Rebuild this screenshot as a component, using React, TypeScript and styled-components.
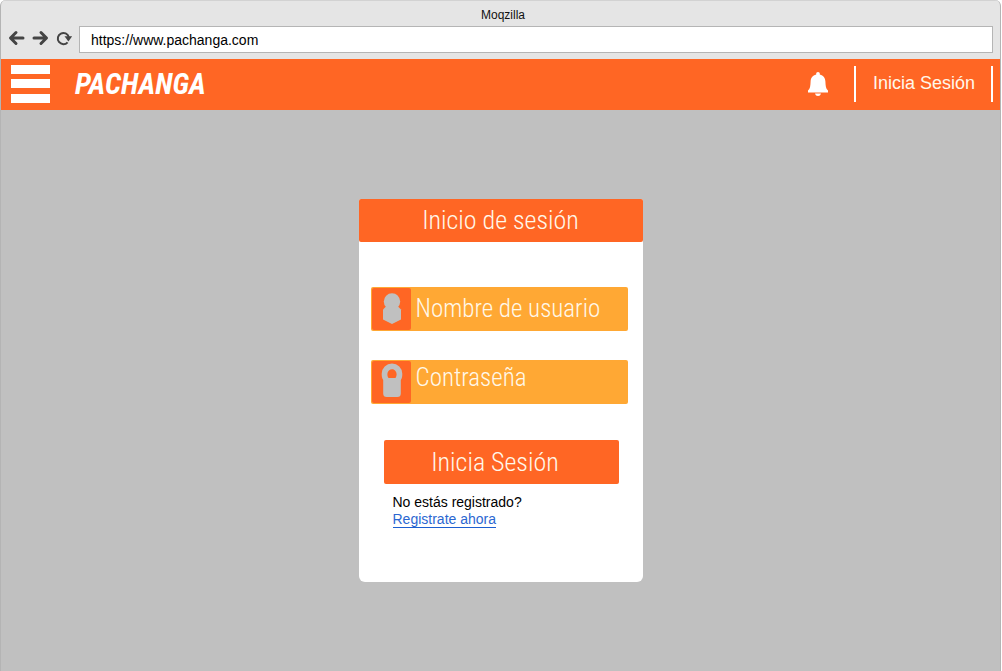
import React from 'react';
import styled, { createGlobalStyle } from 'styled-components';

const orange = '#ff6624';
const amber = '#ffa834';
const cream = '#fff8ea';
const silver = '#c0c0c0';
const sans = '"Liberation Sans", Arial, sans-serif';
const narrow = '"Roboto Condensed", Roboto, "Liberation Sans Narrow", sans-serif';
const condensed = '"Liberation Sans Narrow", "Roboto Condensed", Roboto, sans-serif';

const GlobalStyle = createGlobalStyle`
  * { box-sizing: border-box; }
  body { margin: 0; background: #fff; font-family: ${sans}; }
  button, input { font-family: inherit; margin: 0; }
`;

const Browser = styled.div`
  display: flex;
  flex-direction: column;
  min-height: 100vh;
  margin-right: 1px;
  background: ${silver};
  border: 1px solid #b4b4b4;
  border-width: 0 1px;
  border-radius: 6px 6px 0 0;
  overflow: hidden;
`;

const Chrome = styled.div`
  background: #e5e5e5;
  border-top: 1px solid #d2d2d2;
  padding: 5px 7px 6px;
`;

const WindowTitle = styled.div`
  height: 20px;
  padding-left: 5px;
  font-size: 12px;
  line-height: 18px;
  text-align: center;
  color: #111;
`;

const Toolbar = styled.div`
  display: flex;
  align-items: center;
`;

const ToolButton = styled.button`
  display: flex;
  width: 17px;
  height: 22px;
  padding: 0 0 4px;
  margin-right: 7px;
  align-items: center;
  justify-content: center;
  border: 0;
  background: none;
  color: #444;

  &:last-of-type { margin-right: 6px; }
`;

const Address = styled.input`
  flex: 1;
  min-width: 0;
  height: 27px;
  padding: 0 11px;
  border: 1px solid #b5b5b5;
  background: #fff;
  color: #000;
  font-size: 14px;
`;

const Header = styled.header`
  display: flex;
  align-items: center;
  height: 51px;
  padding: 0 7px 2px 10px;
  background: ${orange};
`;

const MenuButton = styled.button`
  display: flex;
  flex-direction: column;
  justify-content: space-between;
  width: 39px;
  height: 38px;
  padding: 0;
  border: 0;
  background: none;
`;

const MenuBar = styled.span`
  height: 9px;
  background: #fff;
`;

const Brand = styled.h1`
  flex: 1;
  margin: 0 0 0 25px;
  font: italic bold 29px/36px ${condensed};
  color: #fff;
`;

const BellButton = styled.button`
  display: flex;
  padding: 0;
  margin-right: 26px;
  border: 0;
  background: none;
  color: #fff;
`;

const Account = styled.div`
  display: flex;
  align-items: center;
  height: 36px;
  padding: 0 16px 0 17px;
  border: solid #fff;
  border-width: 0 2px;
`;

const AccountLink = styled.a`
  font-size: 18px;
  color: ${cream};
  text-decoration: none;
`;

const Main = styled.main`
  flex: 1;
  padding: 89px 16px;
`;

const Card = styled.form`
  width: 100%;
  max-width: 284px;
  margin: 0 auto;
  padding-bottom: 54px;
  border-radius: 2px 2px 6px 6px;
  background: #fff;
`;

const CardTitle = styled.h2`
  margin: 0 0 45px;
  border-radius: 2px;
  background: ${orange};
  color: ${cream};
  font: 300 26px/43px ${narrow};
  text-align: center;
`;

const Field = styled.label`
  display: flex;
  height: 44px;
  margin: 0 15px 29px 12px;
  padding: 1px;
  border-radius: 2px;
  background: ${amber};
`;

const FieldIcon = styled.span`
  display: flex;
  width: 39px;
  flex: none;
  justify-content: center;
  border-radius: 2px;
  background: ${orange};
`;

const FieldInput = styled.input<{ $raised?: boolean }>`
  flex: 1;
  min-width: 0;
  padding: 0 5px ${(p) => (p.$raised ? 8 : 0)}px;
  border: 0;
  outline: 0;
  background: none;
  color: ${cream};
  font: 300 25px/30px ${narrow};
  &::placeholder { color: ${cream}; opacity: 1; }
`;

const Submit = styled.button`
  display: block;
  width: calc(100% - 49px);
  height: 44px;
  margin: 36px 24px 10px 25px;
  padding: 0 12px 0 0;
  border: 0;
  border-radius: 2px;
  background: ${orange};
  color: ${cream};
  font: 300 26px/44px ${narrow};
`;

const Register = styled.p`
  display: flex;
  flex-direction: column;
  align-items: flex-start;
  margin: 0 34px;
  font-size: 14px;
  line-height: 17px;
  color: #000;
`;

const RegisterLink = styled.a`
  height: 17px;
  border-bottom: 1px solid #1d5fd0;
  color: #2b67d1;
  text-decoration: none;
`;

const Arrow = ({ forward }: { forward?: boolean }) => (
  <svg width="17" height="16" viewBox="0 0 17 16" fill="none" stroke="currentColor" strokeWidth="3" strokeLinecap="round" strokeLinejoin="round">
    <path d={forward ? 'M2 8H14M9 2.5L14.5 8L9 13.5' : 'M15 8H3M8 2.5L2.5 8L8 13.5'} />
  </svg>
);

const Reload = () => (
  <svg width="17" height="16" viewBox="0 0 17 16">
    <path d="M11.6 12.3A5.6 5.6 0 1 1 12.8 7" fill="none" stroke="currentColor" strokeWidth="2" />
    <path d="M8.5 6.2H16.2L12.4 11.5Z" fill="currentColor" />
  </svg>
);

const Bell = () => (
  <svg width="20" height="24" viewBox="0 0 20 24" fill="currentColor">
    <path d="M10 0C8.9 0 8.2.8 8.2 1.8V2.5C4.5 3.3 2.8 6 2.6 9.5C2.4 14 2.2 16.5 0 18.5V20.5H20V18.5C17.8 16.5 17.6 14 17.4 9.5C17.2 6 15.5 3.3 11.8 2.5V1.8C11.8.8 11.1 0 10 0ZM7 21.5H13C12.6 23.2 11.5 24 10 24C8.5 24 7.4 23.2 7 21.5Z" />
  </svg>
);

const UserIcon = () => (
  <svg width="39" height="42" viewBox="0 0 39 42" fill={silver}>
    <circle cx="20" cy="13.5" r="8.2" />
    <path d="M14 18.5H26L29 21.5V31.5L20 36L11 31.5V21.5Z" />
  </svg>
);

const LockIcon = () => (
  <svg width="39" height="42" viewBox="0 0 39 42" fill={silver}>
    <path fillRule="evenodd" d="M20 2.5A10.3 10.3 0 0 1 30.3 12.8C30.3 15.5 30 17.5 28.8 19V32.5Q28.8 36 25.3 36H14.7Q11.2 36 11.2 32.5V19C10 17.5 9.7 15.5 9.7 12.8A10.3 10.3 0 0 1 20 2.5ZM16.5 17H23.5C25.8 14 24.5 8.3 20 8.3S14.2 14 16.5 17Z" />
  </svg>
);

export default function App() {
  return (
    <>
      <GlobalStyle />
      <Browser>
        <Chrome>
          <WindowTitle>Moqzilla</WindowTitle>
          <Toolbar>
            <ToolButton type="button" aria-label="Atrás"><Arrow /></ToolButton>
            <ToolButton type="button" aria-label="Adelante"><Arrow forward /></ToolButton>
            <ToolButton type="button" aria-label="Recargar"><Reload /></ToolButton>
            <Address type="text" aria-label="Dirección" defaultValue="https://www.pachanga.com" />
          </Toolbar>
        </Chrome>
        <Header>
          <MenuButton type="button" aria-label="Menú"><MenuBar /><MenuBar /><MenuBar /></MenuButton>
          <Brand>PACHANGA</Brand>
          <BellButton type="button" aria-label="Notificaciones"><Bell /></BellButton>
          <Account><AccountLink href="#sesion">Inicia Sesión</AccountLink></Account>
        </Header>
        <Main>
          <Card id="sesion" onSubmit={(e) => e.preventDefault()}>
            <CardTitle>Inicio de sesión</CardTitle>
            <Field>
              <FieldIcon><UserIcon /></FieldIcon>
              <FieldInput type="text" aria-label="Nombre de usuario" placeholder="Nombre de usuario" />
            </Field>
            <Field>
              <FieldIcon><LockIcon /></FieldIcon>
              <FieldInput $raised type="password" aria-label="Contraseña" placeholder="Contraseña" />
            </Field>
            <Submit type="submit">Inicia Sesión</Submit>
            <Register>
              <span>No estás registrado?</span>
              <RegisterLink href="#registro">Registrate ahora</RegisterLink>
            </Register>
          </Card>
        </Main>
      </Browser>
    </>
  );
}
